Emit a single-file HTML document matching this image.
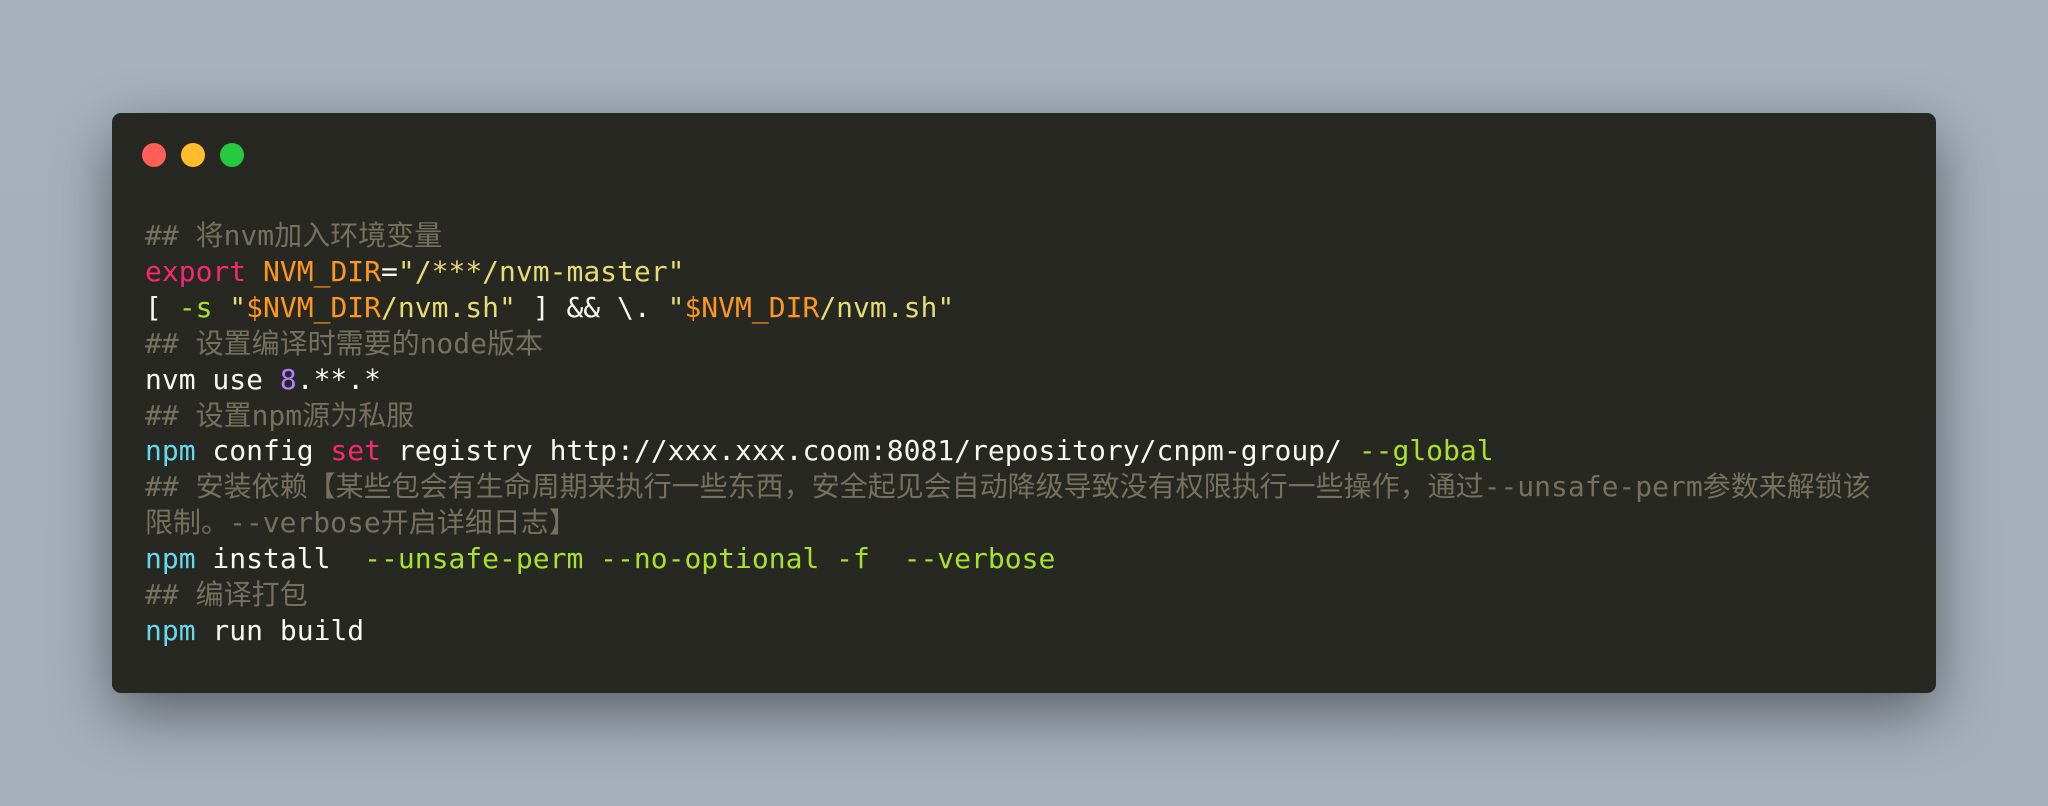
<!DOCTYPE html>
<html><head><meta charset="utf-8"><style>
html,body{margin:0;padding:0;}
body{width:2048px;height:806px;overflow:hidden;background:linear-gradient(180deg,#a7b1bd 0%,#a5afbb 100%);position:relative;font-family:"DejaVu Sans Mono","Liberation Mono","Noto Sans CJK SC",monospace;}
.win{position:absolute;left:112px;top:113px;width:1824px;height:580px;background:#272822;border-radius:9px;box-shadow:0 20px 60px rgba(0,0,0,0.45);}
.dot{position:absolute;top:143px;width:24px;height:24px;border-radius:50%;}
pre{position:absolute;left:145px;top:218px;margin:0;font-family:"DejaVu Sans Mono","Noto Sans CJK SC",monospace;font-size:28px;line-height:35.9px;color:#f8f8f2;white-space:pre;}
.c{color:#75715e}.k{color:#f92672}.o{color:#fd971f}.y{color:#e6db74}.g{color:#a6e22e}.b{color:#66d9ef}.p{color:#ae81ff}
</style></head><body>
<div class="win"></div>
<div class="dot" style="left:142px;background:#ff5f56"></div>
<div class="dot" style="left:181px;background:#ffbd2e"></div>
<div class="dot" style="left:220px;background:#27c93f"></div>
<pre><span class="c">## 将nvm加入环境变量</span>
<span class="k">export</span> <span class="o">NVM_DIR</span>=<span class="y">"/***/nvm-master"</span>
[ <span class="g">-s</span> <span class="y">"</span><span class="o">$NVM_DIR</span><span class="y">/nvm.sh"</span> ] &amp;&amp; \. <span class="y">"</span><span class="o">$NVM_DIR</span><span class="y">/nvm.sh"</span>
<span class="c">## 设置编译时需要的node版本</span>
nvm use <span class="p">8</span>.**.*
<span class="c">## 设置npm源为私服</span>
<span class="b">npm</span> config <span class="k">set</span> registry http://xxx.xxx.coom:8081/repository/cnpm-group/ <span class="g">--global</span>
<span class="c">## 安装依赖【某些包会有生命周期来执行一些东西，安全起见会自动降级导致没有权限执行一些操作，通过--unsafe-perm参数来解锁该</span>
<span class="c">限制。--verbose开启详细日志】</span>
<span class="b">npm</span> install  <span class="g">--unsafe-perm --no-optional -f  --verbose</span>
<span class="c">## 编译打包</span>
<span class="b">npm</span> run build</pre>
</body></html>
